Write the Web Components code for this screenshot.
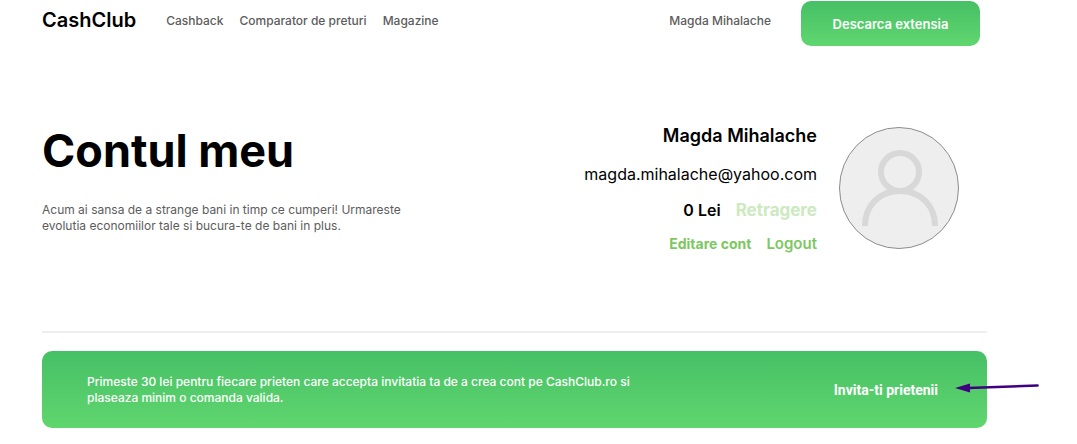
<!DOCTYPE html>
<html lang="ro">
<head>
<meta charset="utf-8">
<meta name="viewport" content="width=device-width, initial-scale=1">
<title>CashClub - Contul meu</title>
<style>
body { margin: 0; background: #fff; color: #000; font-family: Inter, "Liberation Sans", sans-serif; }
</style>
</head>
<body>
<cc-page>
  <cc-header slot="header" user="Magda Mihalache">
    <cc-nav-link href="#cashback">Cashback</cc-nav-link>
    <cc-nav-link href="#comparator">Comparator de preturi</cc-nav-link>
    <cc-nav-link href="#magazine">Magazine</cc-nav-link>
  </cc-header>
  <cc-account>
    <span slot="title">Contul meu</span>
    <span slot="intro">Acum ai sansa de a strange bani in timp ce cumperi! Urmareste evolutia economiilor tale si bucura-te de bani in plus.</span>
    <span slot="name">Magda Mihalache</span>
    <span slot="email">magda.mihalache@yahoo.com</span>
    <span slot="balance">0 Lei</span>
    <cc-avatar slot="avatar"></cc-avatar>
  </cc-account>
  <cc-invite>Primeste 30 lei pentru fiecare prieten care accepta invitatia ta de a crea cont pe CashClub.ro si plaseaza minim o comanda valida.</cc-invite>
</cc-page>
<script>
class Base extends HTMLElement {
  constructor() {
    super();
    const t = document.createElement('template');
    t.innerHTML = this.constructor.markup;
    this.attachShadow({ mode: 'open' }).append(t.content.cloneNode(true));
  }
}

customElements.define('cc-page', class extends Base {
  static markup = `
    <style>
      :host { display: block; padding: 0 90px 16px 42px; }
    </style>
    <slot name="header"></slot>
    <main><slot></slot></main>`;
});

customElements.define('cc-nav-link', class extends Base {
  static markup = `
    <style>
      :host { display: block; }
      a { display: block; color: #5c5c5c; font-size: 12px; line-height: 16px; font-weight: 500; text-decoration: none; }
    </style>
    <a><slot></slot></a>`;
  connectedCallback() { this.shadowRoot.querySelector('a').href = this.getAttribute('href'); }
});

customElements.define('cc-header', class extends Base {
  static markup = `
    <style>
      :host { display: block; padding: 1px 7px 0 0; }
      header { display: flex; align-items: flex-start; }
      .logo { margin-top: 7px; color: #000; font-size: 20px; line-height: 24px; font-weight: 600; text-decoration: none; }
      nav { display: flex; gap: 16px; margin: 12px auto 0 30px; }
      .user { margin: 12px 30px 0 0; color: #5c5c5c; font-size: 12px; line-height: 16px; font-weight: 500; text-decoration: none; }
      button { width: 179px; height: 45px; padding: 0; border: 0; border-radius: 10px; color: #fff;
        background: linear-gradient(#46c066, #60d66e); font: 600 13px/16px Inter, "Liberation Sans", sans-serif; }
    </style>
    <header>
      <a class="logo" href="#">CashClub</a>
      <nav><slot></slot></nav>
      <a class="user" href="#cont"></a>
      <button type="button">Descarca extensia</button>
    </header>`;
  connectedCallback() { this.shadowRoot.querySelector('.user').textContent = this.getAttribute('user'); }
});

customElements.define('cc-avatar', class extends Base {
  static markup = `
    <style>
      :host { display: block; width: 120px; height: 122px; }
      svg { display: block; }
    </style>
    <svg width="120" height="122" viewBox="0 0 120 122" role="img" aria-label="Avatar">
      <ellipse cx="60" cy="61" rx="59.5" ry="60.5" fill="#eee" stroke="#8c8c8c"/>
      <g fill="none" stroke="#d8d8d8" stroke-width="6">
        <ellipse cx="61" cy="45" rx="19" ry="19"/>
        <path d="M26 99C26 78 41 64 61 64S96 78 96 99"/>
      </g>
    </svg>`;
});

customElements.define('cc-account', class extends Base {
  static markup = `
    <style>
      :host { display: block; }
      section { display: flex; align-items: flex-start; justify-content: space-between;
        padding: 78px 28px 79px 0; border-bottom: 2px solid #eee; }
      .intro { max-width: 360px; }
      h1 { margin: 0; font-size: 45px; line-height: 54px; font-weight: 700; }
      p { margin: 0; }
      .intro p { margin-top: 24px; color: #5c5c5c; font-size: 12px; line-height: 16px; }
      .profile { display: flex; gap: 22px; }
      .details { display: flex; flex-direction: column; align-items: flex-end; }
      h2 { margin: 0; font-size: 18px; line-height: 24px; font-weight: 600; }
      .email { margin-top: 16px; font-size: 16px; line-height: 20px; }
      .row { display: flex; gap: 15px; }
      .money { margin-top: 14px; font-size: 16px; line-height: 24px; font-weight: 600; }
      .money button { font-size: 17px; font-weight: 700; }
      .links { margin-top: 14px; align-items: baseline; font-size: 14px; line-height: 16px; font-weight: 700; }
      .logout { font-size: 15px; font-weight: 600; }
      a { color: #7cc860; text-decoration: none; }
      button { padding: 0; border: 0; background: none; color: #cce9bf; font: inherit; }
      ::slotted(cc-avatar) { margin-top: 3px; }
    </style>
    <section>
      <div class="intro">
        <h1><slot name="title"></slot></h1>
        <p><slot name="intro"></slot></p>
      </div>
      <div class="profile">
        <div class="details">
          <h2><slot name="name"></slot></h2>
          <p class="email"><slot name="email"></slot></p>
          <div class="row money"><slot name="balance"></slot><button type="button" disabled>Retragere</button></div>
          <div class="row links"><a href="#editare">Editare cont</a><a class="logout" href="#logout">Logout</a></div>
        </div>
        <slot name="avatar"></slot>
      </div>
    </section>`;
});

customElements.define('cc-invite', class extends Base {
  static markup = `
    <style>
      :host { display: block; position: relative; margin-top: 18px; }
      section { display: flex; align-items: center; justify-content: space-between; min-height: 77px;
        box-sizing: border-box; padding: 16px 49px 16px 45px; border-radius: 10px; color: #fff;
        background: linear-gradient(#46c066, #60d66e); }
      p { margin: 0; max-width: 560px; font-size: 12px; line-height: 16px; font-weight: 500; }
      button { padding: 0; border: 0; background: none; color: #fff; font: 700 14px/16px Roboto, sans-serif; }
      svg { position: absolute; top: 30px; right: -53px; }
    </style>
    <section>
      <p><slot></slot></p>
      <button type="button">Invita-ti prietenii</button>
    </section>
    <svg width="86" height="12" viewBox="0 0 86 12" aria-hidden="true">
      <path d="M14 7L83.500 4.500" stroke="#40007f" stroke-width="2.600" stroke-linecap="round"/>
      <path d="M1 7L16 2.500V11.500Z" fill="#40007f"/>
    </svg>`;
});
</script>
</body>
</html>
